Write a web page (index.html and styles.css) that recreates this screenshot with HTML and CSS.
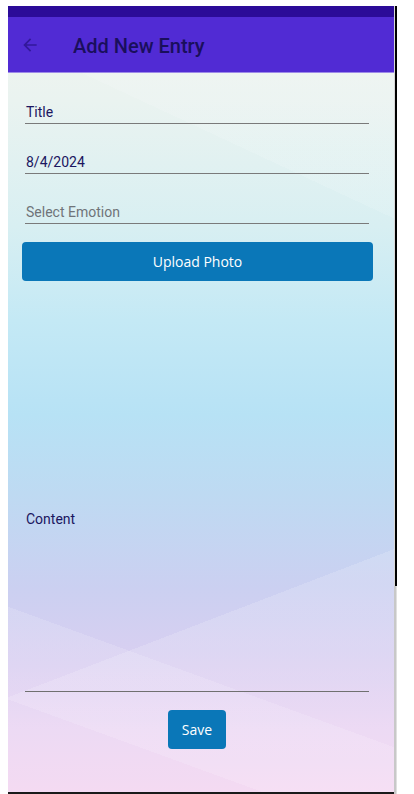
FILE: index.html
```html
<!DOCTYPE html>
<html lang="en">
<head>
<meta charset="utf-8">
<title>Add New Entry</title>
<link rel="stylesheet" href="styles.css">
</head>
<body>
<div class="frame">
  <div class="screen">
    <div class="statusbar"></div>
    <header class="appbar">
      <svg class="back" width="20" height="20" viewBox="0 0 24 24"><path d="M20 11H7.83l5.59-5.59L12 4l-8 8 8 8 1.41-1.41L7.83 13H20v-2z" fill="#32189a"/></svg>
      <h1 class="title">Add New Entry</h1>
    </header>
    <main class="form">
      <div class="field"><span class="value">Title</span></div>
      <div class="field"><span class="value">8/4/2024</span></div>
      <div class="field"><span class="placeholder">Select Emotion</span></div>
      <button class="btn btn-wide">Upload Photo</button>
      <div class="photo-space"></div>
      <div class="editor"><span class="value">Content</span></div>
      <div class="save-row"><button class="btn btn-save">Save</button></div>
    </main>
  </div>
  <div class="edge"></div>
</div>
</body>
</html>
```

FILE: styles.css
```css
html, body {
  margin: 0;
  padding: 0;
  background: #ffffff;
}

.frame {
  display: flex;
  margin: 6px 0 0 8px;
  width: 390px;
}

.screen {
  width: 386px;
  height: 786px;
  display: flex;
  flex-direction: column;
  border-bottom: 2px solid #1a1a1a;
  background:
    linear-gradient(159deg, transparent 0 74%, rgba(255,255,255,0.16) 74% 100%),
    linear-gradient(200deg, transparent 0 80%, rgba(255,255,255,0.14) 80% 90%, transparent 90%),
    linear-gradient(205deg, rgba(255,255,255,0.12) 0 22%, transparent 22%),
    linear-gradient(to bottom,
      #f3f5ef 0%,
      #eaf3f0 12%,
      #d8eff2 28%,
      #c4e9f5 40%,
      #b7e2f5 52%,
      #bedaf2 62%,
      #cbd0f1 74%,
      #dacff1 84%,
      #e9d3f2 92%,
      #f2d3f0 100%);
  font-family: Roboto, "Noto Sans", Arial, sans-serif;
}

.edge {
  width: 3px;
  height: 788px;
  background:
    linear-gradient(to right, #d8d8d8 0 1px, #000 1px 3px) top / 3px 580px no-repeat,
    linear-gradient(to right, #c8c8c8 0 2px, #e0e0e0 2px 3px) bottom / 3px 208px no-repeat;
}

.statusbar {
  height: 11px;
  background: #2b0b98;
}

.appbar {
  height: 55px;
  background: #512bd4;
  border-bottom: 1px solid #9d8ae8;
  display: flex;
  align-items: center;
  padding-left: 12px;
}

.back {
  display: block;
}

.title {
  margin: 2px 0 0 33px;
  font-size: 20px;
  font-weight: 500;
  color: #1a0f5c;
}

.form {
  flex: 1;
  display: flex;
  flex-direction: column;
  padding: 0 25px 0 17px;
}

.field {
  height: 33px;
  margin-top: 17px;
  border-bottom: 1px solid #7a7a7a;
  display: flex;
  align-items: flex-end;
  padding: 0 0 3px 1px;
  box-sizing: border-box;
  font-size: 14px;
}

.field:first-child {
  margin-top: 18px;
}

.value {
  color: #1b1660;
}

.placeholder {
  color: #6f7479;
}

.btn {
  border: none;
  background: #0a77b8;
  color: #ffffff;
  font-family: "Open Sans", "Noto Sans", Arial, sans-serif;
  font-size: 14px;
  border-radius: 4px;
  cursor: pointer;
}

.btn-wide {
  margin: 18px -4px 0 -3px;
  height: 39px;
}

.photo-space {
  height: 226px;
}

.editor {
  height: 185px;
  border-bottom: 1px solid #707070;
  padding: 4px 0 0 1px;
  box-sizing: border-box;
  font-size: 14px;
}

.save-row {
  display: flex;
  justify-content: center;
  padding-top: 18px;
}

.btn-save {
  width: 58px;
  height: 39px;
  padding: 0;
}
```
